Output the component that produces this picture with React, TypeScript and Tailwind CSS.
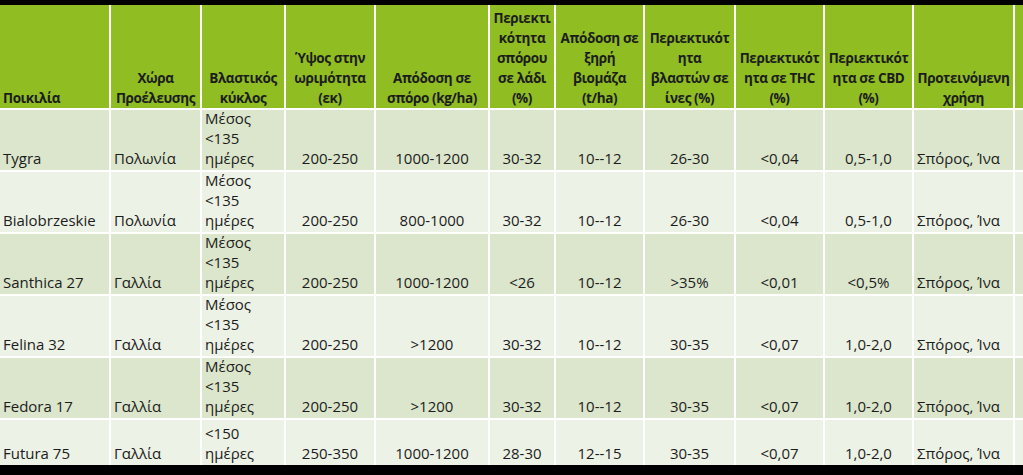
const headers: { lines: string[]; align?: 'left' | 'center' }[] = [
  { lines: ['Ποικιλία'], align: 'left' },
  { lines: ['Χώρα', 'Προέλευσης'] },
  { lines: ['Βλαστικός', 'κύκλος'] },
  { lines: ['Ύψος στην', 'ωριμότητα', '(εκ)'] },
  { lines: ['Απόδοση σε', 'σπόρο (kg/ha)'] },
  { lines: ['Περιεκτι', 'κότητα', 'σπόρου', 'σε λάδι', '(%)'] },
  { lines: ['Απόδοση σε', 'ξηρή', 'βιομάζα', '(t/ha)'] },
  { lines: ['Περιεκτικότ', 'ητα', 'βλαστών σε', 'ίνες (%)'] },
  { lines: ['Περιεκτικότ', 'ητα σε THC', '(%)'] },
  { lines: ['Περιεκτικότ', 'ητα σε CBD', '(%)'] },
  { lines: ['Προτεινόμενη', 'χρήση'] },
];

const rows: string[][] = [
  ['Tygra', 'Πολωνία', 'Μέσος\n<135\nημέρες', '200-250', '1000-1200', '30-32', '10--12', '26-30', '<0,04', '0,5-1,0', 'Σπόρος, Ίνα'],
  ['Bialobrzeskie', 'Πολωνία', 'Μέσος\n<135\nημέρες', '200-250', '800-1000', '30-32', '10--12', '26-30', '<0,04', '0,5-1,0', 'Σπόρος, Ίνα'],
  ['Santhica 27', 'Γαλλία', 'Μέσος\n<135\nημέρες', '200-250', '1000-1200', '<26', '10--12', '>35%', '<0,01', '<0,5%', 'Σπόρος, Ίνα'],
  ['Felina 32', 'Γαλλία', 'Μέσος\n<135\nημέρες', '200-250', '>1200', '30-32', '10--12', '30-35', '<0,07', '1,0-2,0', 'Σπόρος, Ίνα'],
  ['Fedora 17', 'Γαλλία', 'Μέσος\n<135\nημέρες', '200-250', '>1200', '30-32', '10--12', '30-35', '<0,07', '1,0-2,0', 'Σπόρος, Ίνα'],
  ['Futura 75', 'Γαλλία', '<150\nημέρες', '250-350', '1000-1200', '28-30', '12--15', '30-35', '<0,07', '1,0-2,0', 'Σπόρος, Ίνα'],
];

const font = { fontFamily: '"Open Sans", "Noto Sans", sans-serif' };

export default function App() {
  return (
    <div className="w-[1023px] h-[475px] bg-black overflow-hidden pt-[5px]" style={font}>
      <div className="h-[460px] overflow-hidden bg-white">
        <div className="grid grid-cols-[109px_89px_82px_88px_112px_64px_87px_89px_87px_87px_99px_20px] grid-rows-[103px_60px_60px_60px_60px_60px_45px] gap-[2px] bg-white text-[#1c1c1c]">
          {headers.map((h, i) => (
            <div
              key={i}
              className={`bg-[#8fbd22] flex flex-col justify-end font-bold text-[13.5px] tracking-[-0.4px] leading-[20px] whitespace-nowrap overflow-hidden ${
                h.align === 'left' ? 'items-start pl-[3px]' : 'items-center'
              }`}
            >
              {h.lines.map((l, j) => (
                <span key={j}>{l}</span>
              ))}
            </div>
          ))}
          <div className="bg-[#8fbd22]" />
          {rows.map((r, ri) => {
            const bg = ri % 2 === 0 ? 'bg-[#dbe6cc]' : 'bg-[#edf2e6]';
            return [
              ...r.map((c, ci) => (
                <div
                  key={`${ri}-${ci}`}
                  className={`${bg} flex flex-col justify-end text-[15px] leading-[20px] pb-[2px] whitespace-nowrap ${
                    ci < 3 || ci === 10 ? 'items-start pl-[3px]' : 'items-center'
                  }`}
                >
                  {c.split('\n').map((l, j) => (
                    <span key={j}>{l}</span>
                  ))}
                </div>
              )),
              <div key={`${ri}-x`} className={bg} />,
            ];
          })}
        </div>
      </div>
    </div>
  );
}
